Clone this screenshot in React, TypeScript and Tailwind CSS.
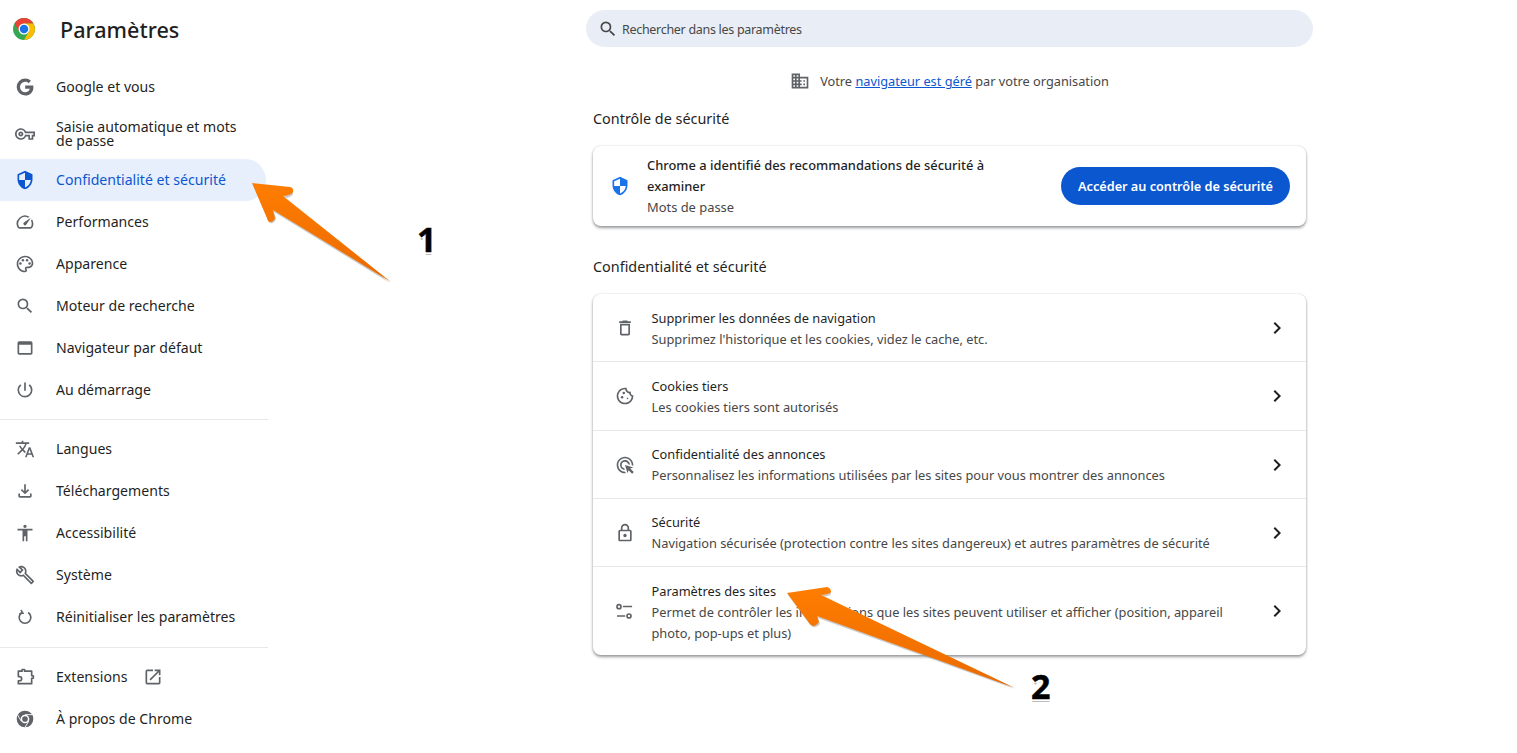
import type { ComponentType } from 'react'
import {
  MdSecurity, MdOutlineVpnKey, MdOutlineSpeed, MdOutlinePalette, MdSearch, MdOutlineWebAsset,
  MdPowerSettingsNew, MdTranslate, MdOutlineFileDownload, MdAccessibility, MdOutlineBuild,
  MdOpenInNew, MdOutlineDomain, MdOutlineDelete, MdOutlineCookie,
  MdOutlineAdsClick, MdOutlineLock, MdChevronRight,
} from 'react-icons/md'

type Icon = ComponentType<{ className?: string }>

function GoogleG({ className }: { className?: string }) {
  return (
    <svg viewBox="0 0 24 24" className={className} fill="currentColor">
      <path d="M12.2 10.2v3.9h5.500c-.5 2.500-2.600 4.100-5.500 4.100a6.200 6.200 0 0 1 0-12.400c1.600 0 3 .6 4.100 1.600l2.900-2.900A10.200 10.200 0 0 0 12.200 1.800a10.200 10.200 0 0 0 0 20.400c5.900 0 9.900-4.100 9.900-10 0-.7-.1-1.400-.2-2z" />
    </svg>
  )
}

function ResetIcon({ className }: { className?: string }) {
  return (
    <svg viewBox="0 0 24 24" className={className} fill="none" stroke="currentColor" strokeWidth="2">
      <path d="M8.200 6.600a7 7 0 1 0 7.600 0" />
      <path d="M7 3.500 9.600 7.400 5.200 8.200" strokeWidth="1.800" />
    </svg>
  )
}

function PuzzleIcon({ className }: { className?: string }) {
  return (
    <svg viewBox="0 0 24 24" className={className} fill="none" stroke="currentColor" strokeWidth="2" strokeLinejoin="round">
      <path d="M4 5h4.500V3h3v2H20v5.500h2v3h-2V20H4v-3.500h1.500a2.500 2.500 0 0 0 0-5H4z" />
    </svg>
  )
}

function SlidersIcon({ className }: { className?: string }) {
  return (
    <svg viewBox="0 0 24 24" className={className} fill="none" stroke="currentColor" strokeWidth="2">
      <circle cx="4.800" cy="6.800" r="2.400" />
      <path d="M9.500 6.600h11M2.400 18h9.800" />
      <circle cx="16.800" cy="18" r="2.400" />
    </svg>
  )
}

function ChromeGray({ className }: { className?: string }) {
  return (
    <svg viewBox="0 0 24 24" className={className}>
      <circle cx="12" cy="12" r="10" fill="currentColor" />
      <circle cx="12" cy="12" r="5.200" fill="#fff" />
      <circle cx="12" cy="12" r="3.400" fill="currentColor" />
      <path d="M12 6.800h8.600M7.500 14.600 3.200 7.200M16.500 14.600 12 22" stroke="#fff" strokeWidth="1.100" />
    </svg>
  )
}

function ChromeLogo() {
  return (
    <svg viewBox="0 0 48 48" className="w-6 h-6 shrink-0">
      <circle cx="24" cy="24" r="22" fill="#34a853" />
      <path fill="#ea4335" d="M24 13H43A22 22 0 0 0 5 13L14.500 29.500Z" />
      <path fill="#fbbc04" d="M43 13A22 22 0 0 1 24 46L33.500 29.500 24 13Z" />
      <circle cx="24" cy="24" r="11" fill="#fff" />
      <circle cx="24" cy="24" r="8.500" fill="#1a73e8" />
    </svg>
  )
}

const group1: { label: string; icon: Icon; active?: boolean; tall?: boolean }[] = [
  { label: 'Google et vous', icon: GoogleG },
  { label: 'Saisie automatique et mots de passe', icon: MdOutlineVpnKey, tall: true },
  { label: 'Confidentialité et sécurité', icon: MdSecurity, active: true },
  { label: 'Performances', icon: MdOutlineSpeed },
  { label: 'Apparence', icon: MdOutlinePalette },
  { label: 'Moteur de recherche', icon: MdSearch },
  { label: 'Navigateur par défaut', icon: MdOutlineWebAsset },
  { label: 'Au démarrage', icon: MdPowerSettingsNew },
]

const group2: { label: string; icon: Icon }[] = [
  { label: 'Langues', icon: MdTranslate },
  { label: 'Téléchargements', icon: MdOutlineFileDownload },
  { label: 'Accessibilité', icon: MdAccessibility },
  { label: 'Système', icon: MdOutlineBuild },
  { label: 'Réinitialiser les paramètres', icon: ResetIcon },
]

const privacyRows: { title: string; sub: string; icon: Icon; h: string; pt: string }[] = [
  { title: 'Supprimer les données de navigation', sub: "Supprimez l'historique et les cookies, videz le cache, etc.", icon: MdOutlineDelete, h: 'h-[67px]', pt: 'pt-[2px]' },
  { title: 'Cookies tiers', sub: 'Les cookies tiers sont autorisés', icon: MdOutlineCookie, h: 'h-[69px]', pt: 'pt-[1px]' },
  { title: 'Confidentialité des annonces', sub: 'Personnalisez les informations utilisées par les sites pour vous montrer des annonces', icon: MdOutlineAdsClick, h: 'h-[68px]', pt: '' },
  { title: 'Sécurité', sub: 'Navigation sécurisée (protection contre les sites dangereux) et autres paramètres de sécurité', icon: MdOutlineLock, h: 'h-[68px]', pt: '' },
  { title: 'Paramètres des sites', sub: 'Permet de contrôler les informations que les sites peuvent utiliser et afficher (position, appareil photo, pop-ups et plus)', icon: SlidersIcon, h: 'h-[89px]', pt: 'pt-[2px]' },
]

function NavRow({ label, icon: Ic, active, tall }: { label: string; icon: Icon; active?: boolean; tall?: boolean }) {
  return (
    <div className={`flex items-center pl-[15px] pr-6 ${tall ? 'h-[51px]' : 'h-[42px]'} ${active ? 'bg-[#e7effc] text-[#0b57d0] rounded-r-[21px] w-[266px]' : 'text-[#1f1f1f]'}`}>
      <Ic className={`w-5 h-5 shrink-0 ${active ? 'text-[#0b57d0]' : 'text-[#5f6368]'}`} />
      <span className="ml-[21px] text-[14.1px] leading-[14px]">{label}</span>
    </div>
  )
}

function Arrows() {
  return (
    <svg className="absolute inset-0 w-[1517px] h-[753px] pointer-events-none" viewBox="0 0 1517 753">
      <defs>
        <linearGradient id="orange" x1="0" y1="0" x2="0" y2="1">
          <stop offset="0" stopColor="#ff7d00" />
          <stop offset="1" stopColor="#ea6a00" />
        </linearGradient>
      </defs>
      <path fill="#777" opacity="0.4" d="M253 185 289 189Q294 190 293 194Q291 198 284 198L390 283 274 212 276 219Q274 224 270 223Q268 222 267 218Z" />
      <path fill="url(#orange)" d="M252 183 290 187Q294 188 293 192Q292 195 283 196L391 282 273 210 275 218Q274 222 270 222Q268 222 267 218Z" />
      <path fill="#777" opacity="0.4" d="M788 595 827 589Q831 590 831 594Q830 596 822 597L1015 689 818 618 820 624Q817 628 813 627Q810 626 808 622Z" />
      <path fill="url(#orange)" d="M787 593 827 587Q831 588 831 592Q830 594 821 595L1015 688 817 616 819 622Q816 626 813 626Q810 625 807 620Z" />
    </svg>
  )
}

const stickerText = "absolute text-[34px] leading-[40px] font-bold text-black [-webkit-text-stroke:0.5px_black] [text-shadow:-2px_0_0_#fff,2px_0_0_#fff,0_-2px_0_#fff,-2px_-2px_0_#fff,2px_-2px_0_#fff,2px_2px_0_#fff,-2px_2px_0_#fff,0_3px_0_#bbb]"

export default function App() {
  return (
    <div className="relative flex w-[1517px] h-[753px] overflow-hidden bg-white font-['Noto_Sans',sans-serif] text-[#1f1f1f]">
      {/* sidebar */}
      <aside className="w-[268px] shrink-0 flex flex-col">
        <header className="h-[66px] flex items-start pl-3 pt-[17px] shrink-0">
          <ChromeLogo />
          <h1 className="ml-6 text-[21.6px] leading-[26px] font-medium">Paramètres</h1>
        </header>
        {group1.map(r => <NavRow key={r.label} {...r} />)}
        <div className="h-px bg-[#e8e8e8] my-2" />
        {group2.map(r => <NavRow key={r.label} {...r} />)}
        <div className="h-px bg-[#e8e8e8] mt-[9px] mb-2" />
        <div className="flex items-center h-[42px] pl-[15px]">
          <PuzzleIcon className="w-5 h-5 text-[#5f6368] shrink-0" />
          <span className="ml-[21px] text-[14.1px]">Extensions</span>
          <MdOpenInNew className="ml-[16px] w-[20px] h-[20px] text-[#5f6368]" />
        </div>
        <NavRow label="À propos de Chrome" icon={ChromeGray} />
      </aside>

      {/* main */}
      <main className="flex-1 pl-[318px] pt-[10px]">
        <div className="w-[727px]">
          <div className="h-[37px] rounded-full bg-[#e9eef6] flex items-center pl-3 text-[#474747]">
            <MdSearch className="w-[20px] h-[20px] text-[#474747]" />
            <span className="ml-[4px] pt-[3px] text-[12.5px] tracking-[-0.3px]">Rechercher dans les paramètres</span>
          </div>

          <div className="mt-6 h-[20px] flex items-center justify-center text-[12.75px] text-[#474747]">
            <MdOutlineDomain className="w-5 h-5 mr-[10px] text-[#5f6368]" />
            <span className="pt-[2px]">Votre <span className="text-[#0b57d0] underline">navigateur est géré</span> par votre organisation</span>
          </div>

          <div className="mx-[7px] w-[713px]">
            <h2 className="mt-[18px] h-[20px] text-[14.4px] leading-[20px]">Contrôle de sécurité</h2>
            <section className="mt-[17px] h-[80px] rounded-lg bg-white shadow-[0_2px_3px_rgba(60,64,67,0.5),0_0_2px_rgba(60,64,67,0.2)] flex items-center pl-[17px] pr-[16px]">
              <MdSecurity className="w-5 h-5 shrink-0 text-[#1a73e8]" />
              <div className="ml-[17px] w-[370px] text-[12.9px] leading-[21px]">
                <div className="font-medium">Chrome a identifié des recommandations de sécurité à examiner</div>
                <div className="text-[#474747]">Mots de passe</div>
              </div>
              <button className="ml-auto h-[38px] w-[229px] pt-[2px] rounded-full bg-[#0b57d0] text-white text-[12.7px] font-semibold">Accéder au contrôle de sécurité</button>
            </section>

            <h2 className="mt-[31px] h-[20px] text-[14.4px] leading-[20px]">Confidentialité et sécurité</h2>
            <section className="mt-[17px] rounded-lg bg-white shadow-[0_2px_3px_rgba(60,64,67,0.5),0_0_2px_rgba(60,64,67,0.2)]">
              {privacyRows.map((r, i) => (
                <div key={r.title} className={`flex items-center pl-[22px] pr-[17px] ${r.h} ${i ? 'border-t border-[#e8e8e8]' : ''}`}>
                  <r.icon className="w-5 h-5 shrink-0 text-[#5f6368]" />
                  <div className={`ml-[16.500px] flex-1 text-[12.8px] leading-[21px] ${r.pt}`}>
                    <div>{r.title}</div>
                    <div className="text-[#474747] w-[590px]">{r.sub}</div>
                  </div>
                  <MdChevronRight className="w-6 h-6 shrink-0 text-[#1f1f1f]" />
                </div>
              ))}
            </section>
          </div>
        </div>
      </main>

      <Arrows />
      <span className={`${stickerText} left-[417px] top-[219px]`}>1</span>
      <span className={`${stickerText} left-[1031px] top-[666px]`}>2</span>
    </div>
  )
}
